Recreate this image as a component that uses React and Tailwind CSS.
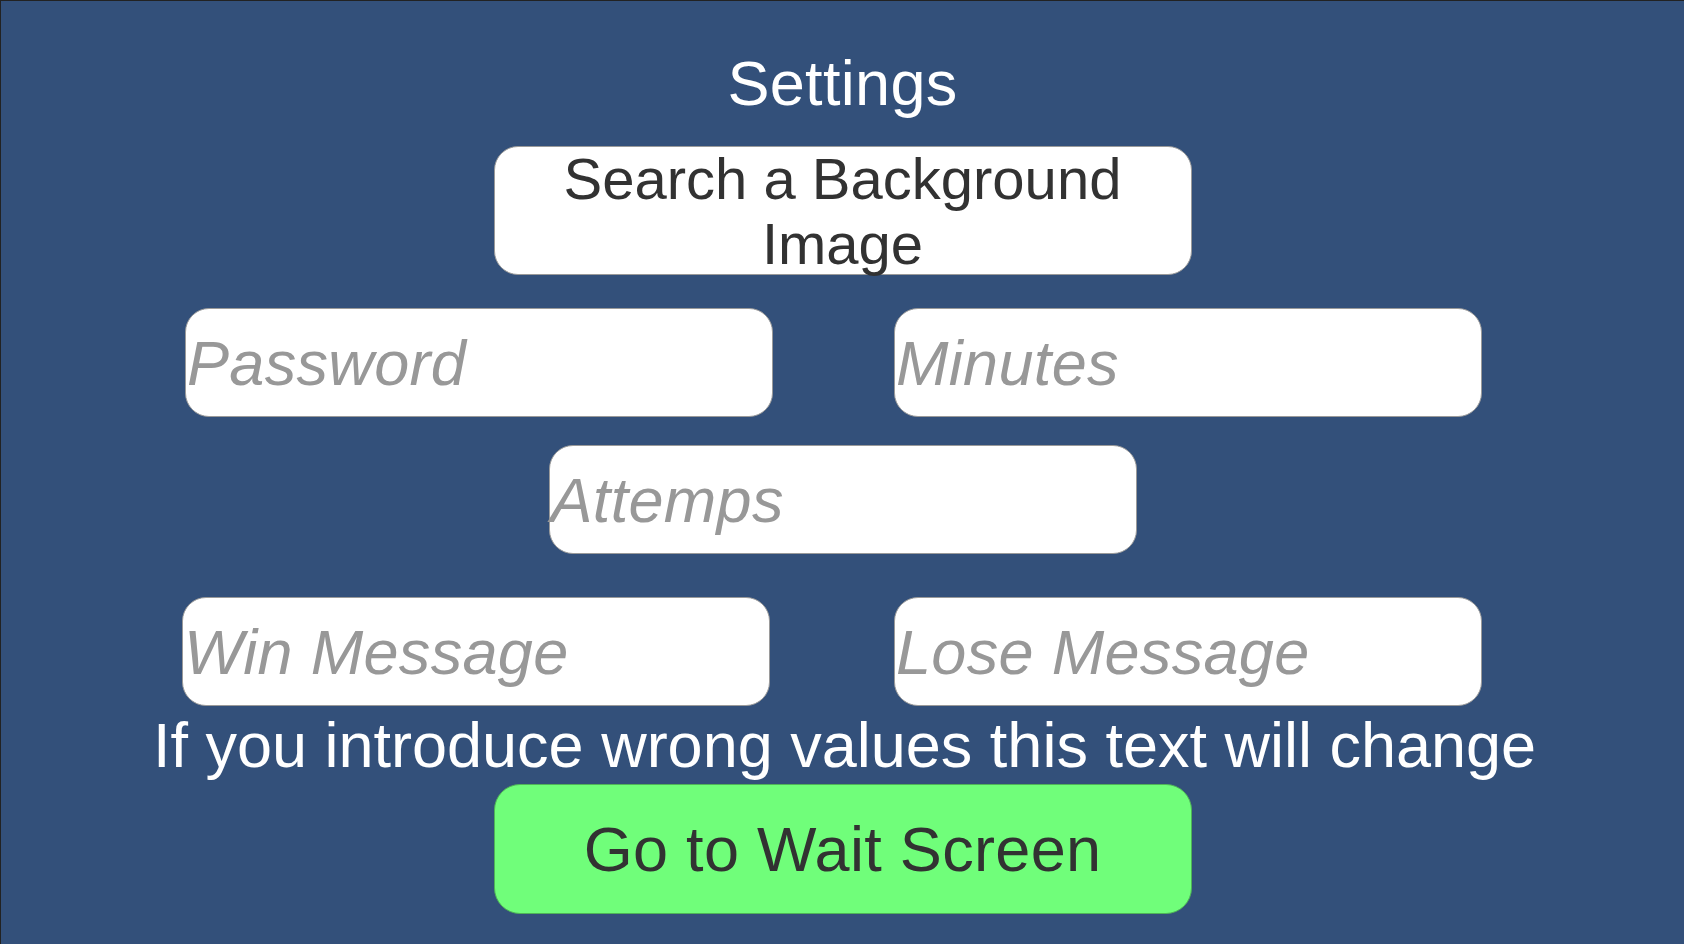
import React from 'react';

const font = { fontFamily: '"Liberation Sans", Arial, sans-serif' };

const InputBox = ({ placeholder, className = '' }) => (
    <div className={`flex h-[109px] w-[588px] items-center rounded-[24px] border border-[#9a9a9a] bg-white pl-[1px] ${className}`}>
        <span className="text-[63px] italic leading-[70px] tracking-[0.005em] text-[#989898]">{placeholder}</span>
    </div>
);

const App = () => {
    return (
        <div
            style={font}
            className="flex h-[944px] w-full flex-col items-center overflow-hidden border-l border-t border-[#222222] bg-[#33507a] pt-[47px]"
        >
            <h1 className="text-[63px] font-normal leading-[70px] tracking-[0.005em] text-white">Settings</h1>

            <button
                type="button"
                className="mt-[28px] flex h-[129px] w-[698px] items-center justify-center rounded-[24px] border border-[#9a9a9a] bg-white px-4 text-center text-[58px] leading-[65px] text-[#323232]"
            >
                Search a Background Image
            </button>

            <div className="mt-[33px] flex w-full gap-[121px] pl-[184px]">
                <InputBox placeholder="Password" />
                <InputBox placeholder="Minutes" />
            </div>

            <InputBox placeholder="Attemps" className="mt-[28px] w-[586px]" />

            <div className="mt-[43px] flex w-full gap-[124px] pl-[181px]">
                <InputBox placeholder="Win Message" className="w-[587px]" />
                <InputBox placeholder="Lose Message" />
            </div>

            <p className="mt-[4px] whitespace-nowrap pl-[4px] text-[63px] leading-[70px] text-white">
                If you introduce wrong values this text will change
            </p>

            <button
                type="button"
                className="mt-[4px] flex h-[130px] w-[698px] items-center justify-center rounded-[26px] border border-[#4fb457] bg-[#70fe7a] text-[63px] leading-[70px] tracking-[0.005em] text-[#323232]"
            >
                Go to Wait Screen
            </button>
        </div>
    );
};

export default App;
